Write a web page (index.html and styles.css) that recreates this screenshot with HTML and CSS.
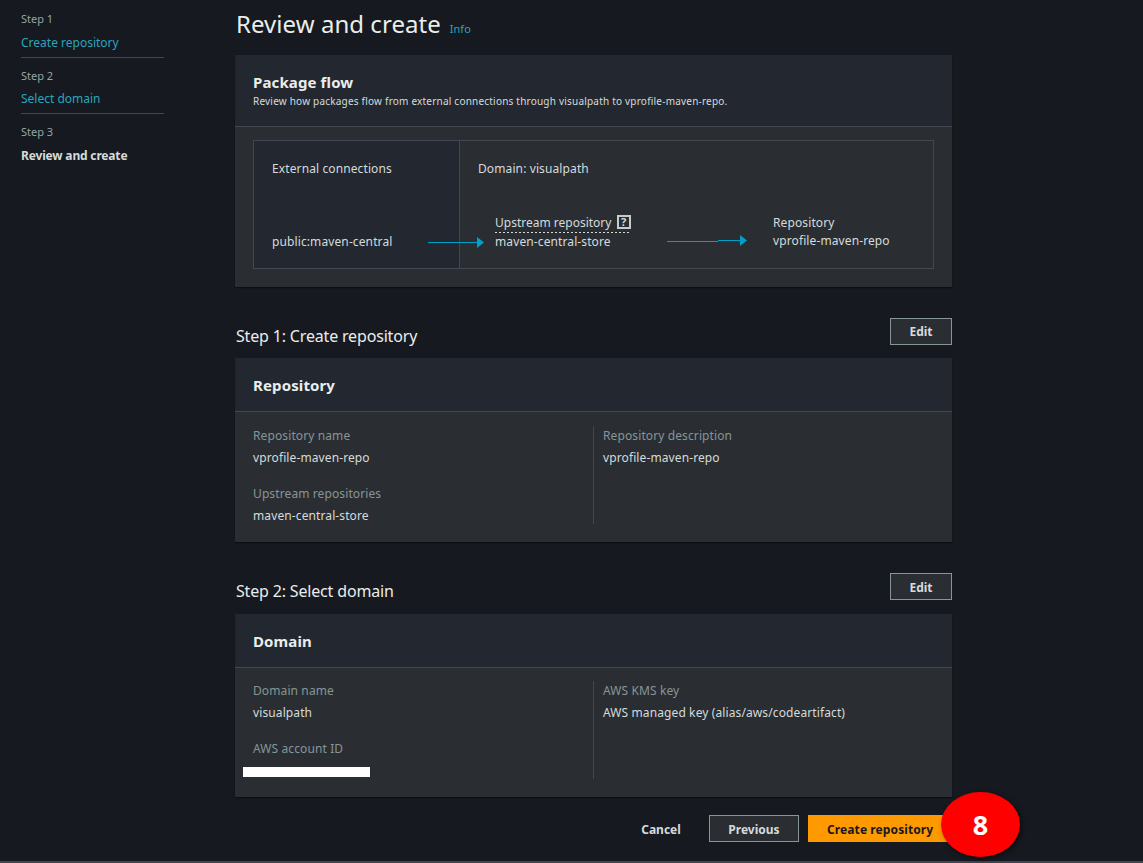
FILE: index.html
```html
<!DOCTYPE html>
<html lang="en">
<head>
<meta charset="utf-8">
<title>Review and create</title>
<link rel="stylesheet" href="styles.css">
</head>
<body>
<div class="page">
  <nav class="steps">
    <div class="step"><div class="step-no">Step 1</div><a class="step-link">Create repository</a></div>
    <div class="step"><div class="step-no">Step 2</div><a class="step-link">Select domain</a></div>
    <div class="step last"><div class="step-no">Step 3</div><div class="step-current">Review and create</div></div>
  </nav>
  <main class="main">
    <header class="title-row"><h1>Review and create</h1><a class="info">Info</a></header>

    <section class="card">
      <div class="card-head flow-head">
        <h2>Package flow</h2>
        <p>Review how packages flow from external connections through visualpath to vprofile-maven-repo.</p>
      </div>
      <div class="flow-body">
        <div class="flow">
          <div class="ext">
            <div>External connections</div>
            <div class="ext-name">public:maven-central</div>
          </div>
          <div class="domain">
            <div>Domain: visualpath</div>
            <div class="chain">
              <div class="upstream">
                <div class="dotted">Upstream repository <span class="q">?</span></div>
                <div>maven-central-store</div>
              </div>
              <div class="repo">
                <div>Repository</div>
                <div>vprofile-maven-repo</div>
              </div>
            </div>
          </div>
          <svg class="arrow arrow-a" width="57" height="12" viewBox="0 0 57 12"><path d="M0 6.5H49" stroke="#00a1c9" stroke-width="1"/><path d="M49 1l7 5.5-7 5.5z" fill="#00a1c9"/></svg>
          <svg class="arrow arrow-b" width="81" height="12" viewBox="0 0 81 12"><path d="M0 7.5H51M51 6.5H73" stroke="#00a1c9" stroke-width="1"/><path d="M73 1l7 5.5-7 5.5z" fill="#00a1c9"/></svg>
        </div>
      </div>
    </section>

    <div class="section-row"><h3>Step 1: Create repository</h3><button class="btn edit">Edit</button></div>
    <section class="card">
      <div class="card-head"><h2>Repository</h2></div>
      <div class="details">
        <div class="col">
          <div class="label">Repository name</div>
          <div class="value">vprofile-maven-repo</div>
          <div class="label gap">Upstream repositories</div>
          <div class="value">maven-central-store</div>
        </div>
        <div class="col right">
          <div class="label">Repository description</div>
          <div class="value">vprofile-maven-repo</div>
        </div>
      </div>
    </section>

    <div class="section-row second"><h3>Step 2: Select domain</h3><button class="btn edit">Edit</button></div>
    <section class="card">
      <div class="card-head"><h2>Domain</h2></div>
      <div class="details tight">
        <div class="col">
          <div class="label">Domain name</div>
          <div class="value">visualpath</div>
          <div class="label gap">AWS account ID</div>
          <div class="value redact-wrap"><span class="redact"></span></div>
        </div>
        <div class="col right">
          <div class="label">AWS KMS key</div>
          <div class="value">AWS managed key (alias/aws/codeartifact)</div>
        </div>
      </div>
    </section>

    <footer class="actions">
      <button class="btn-text">Cancel</button>
      <button class="btn prev">Previous</button>
      <div class="primary-wrap">
        <button class="btn-primary">Create repository</button>
        <span class="badge">8</span>
      </div>
    </footer>
  </main>
</div>
<div class="page-line"></div>
</body>
</html>
```
FILE: styles.css
```css
* { box-sizing: border-box; }
html, body { margin: 0; height: 863px; overflow: hidden; }
body {
  background: #16191f;
  color: #d5dbdb;
  font-family: "Noto Sans", "Liberation Sans", sans-serif;
  font-size: 12px;
  line-height: 18px;
  letter-spacing: .11px;
}
.page { display: flex; height: 861px; }
.steps { width: 235px; flex: none; padding: 10px 71px 0 21px; letter-spacing: 0; }
.step { border-bottom: 1px solid #414750; padding: 9px 0 5px; }
.step:first-child { padding-top: 0; }
.step.last { border-bottom: 0; }
.step-no { font-size: 11px; line-height: 18px; color: #95a5a6; }
.step-link { display: block; margin-top: 5px; font-size: 12px; line-height: 18px; color: #2ba5bd; }
.step:first-child .step-link { margin-top: 6px; }
.step-current { margin-top: 6px; font-size: 12px; line-height: 18px; font-weight: 700; color: #d5dbdb; letter-spacing: -.17px; }

.main { width: 717px; flex: none; position: relative; }
.title-row { height: 55px; display: flex; align-items: baseline; padding: 6px 0 0 1px; gap: 9px; }
h1 { margin: 0; font-size: 24px; line-height: 36px; font-weight: 400; color: #eaeded; letter-spacing: .05px; }
.info { font-size: 11px; color: #2ba5bd; letter-spacing: 0; }

.card { background: #2a2e33; box-shadow: 0 1px 1px #0c0e12; border-top: 1px solid #232830; }
.card-head { height: 53px; background: #232830; border-bottom: 1px solid #414750; padding: 16px 18px 0; }
.flow-head { height: 71px; }
h2 { margin: 0; font-size: 15px; line-height: 20px; font-weight: 700; color: #eaeded; letter-spacing: .12px; }
.card-head p { margin: 2px 0 0; font-size: 10px; line-height: 14px; color: #d5dbdb; letter-spacing: .21px; }

.flow-body { padding: 13px 18px 18px; height: 160px; }
.flow { display: flex; height: 129px; border: 1px solid #414750; position: relative; }
.ext { width: 206px; flex: none; background: #232830; border-right: 1px solid #414750; padding: 19px 18px 0; }
.ext-name { margin-top: 55px; }
.domain { flex: 1; padding: 19px 18px 0; }
.chain { display: flex; margin-top: 36px; padding-left: 17px; }
.upstream { width: 278px; }
.dotted {
  display: inline-block; height: 19px; line-height: 18px; letter-spacing: 0;
  background: repeating-linear-gradient(90deg, #d5dbdb 0 2px, transparent 2px 4px) left bottom / 100% 1px no-repeat;
}
.q { display: inline-block; width: 14px; height: 14px; line-height: 10px; margin-left: 2px; border: 2px solid #c4cccc; font-size: 11px; font-weight: 700; text-align: center; vertical-align: 1px; }
.arrow { position: absolute; }
.arrow-a { left: 174px; top: 95px; }
.arrow-b { left: 413px; top: 93px; }

.section-row { display: flex; justify-content: space-between; height: 71px; padding-top: 31px; align-items: flex-start; }
.section-row.second { height: 72px; padding-top: 31px; }
h3 { margin: 6px 0 0 1px; font-size: 16px; line-height: 24px; font-weight: 400; color: #eaeded; letter-spacing: -.17px; }
.btn { background: #2a2e33; border: 1px solid #879596; color: #d5dbdb; font: 700 12px/16px "Noto Sans", "Liberation Sans", sans-serif; padding: 0; }
.edit { width: 62px; height: 27px; }
.second .edit { padding-top: 2px; }

.details { display: flex; padding: 14px 18px 18px; height: 130px; }
.details.tight { padding-top: 13px; height: 129px; }
.col { flex: none; }
.col:first-child { width: 340px; }
.col.right { flex: 1; border-left: 1px solid #414750; padding-left: 9px; }
.label { color: #879596; line-height: 20px; }
.value { color: #d5dbdb; margin-top: 2px; line-height: 20px; height: 20px; }
.label.gap { margin-top: 16px; }
.redact-wrap { position: relative; }
.redact { position: absolute; left: -10px; top: 6px; width: 127px; height: 10px; background: #fff; }

.actions { display: flex; align-items: center; height: 27px; margin-top: 18px; position: relative; }
.btn-text { background: none; border: 0; color: #d5dbdb; font: 700 12px/16px "Noto Sans", "Liberation Sans", sans-serif; margin-left: 406px; width: 40px; padding: 2px 0 0; }
.prev { width: 90px; height: 27px; margin-left: 28px; padding-top: 2px; }
.primary-wrap { position: relative; margin-left: 9px; }
.btn-primary { display: block; width: 144px; height: 27px; border: 0; background: #ff9900; color: #16191f; font: 700 12px/16px "Noto Sans", "Liberation Sans", sans-serif; letter-spacing: .1px; text-align: left; padding: 2px 0 0 19px; }
.badge {
  position: absolute; left: 133px; top: -23px; width: 79px; height: 65px; border-radius: 50%;
  background: #ff0000; color: #fff; font-size: 27px; font-weight: 700; line-height: 65px; text-align: center;
  box-shadow: 2px 2px 5px rgba(0,0,0,.5);
}
.page-line { height: 2px; background: #414750; }
```
